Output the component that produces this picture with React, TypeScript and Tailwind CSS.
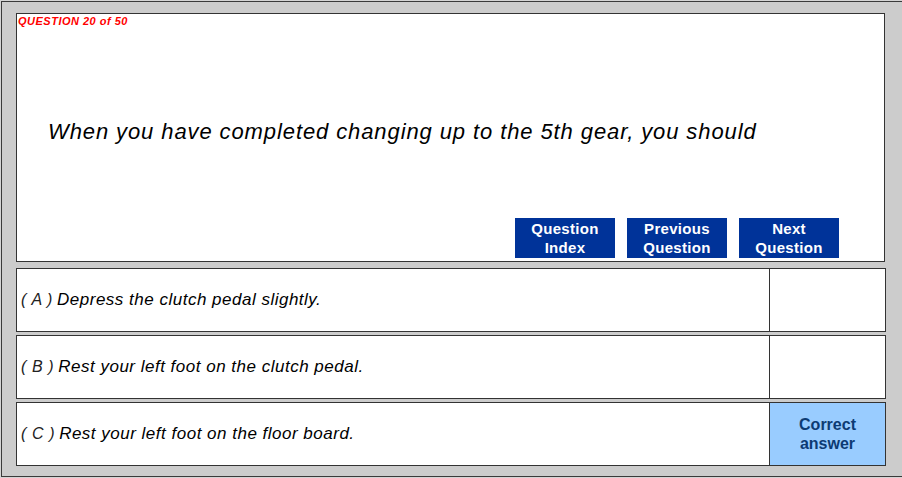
const answers = [
  { letter: "A", text: "Depress the clutch pedal slightly.", correct: false },
  { letter: "B", text: "Rest your left foot on the clutch pedal.", correct: false },
  { letter: "C", text: "Rest your left foot on the floor board.", correct: true },
];

const buttons = [
  ["Question", "Index"],
  ["Previous", "Question"],
  ["Next", "Question"],
];

export default function App() {
  return (
    <div className="w-[902px] h-[478px] bg-[#d4d4d4] pt-px pl-px overflow-hidden" style={{ fontFamily: '"Liberation Sans", Arial, sans-serif' }}>
      <div className="h-[476px] bg-[#cccccc] border-l border-t border-b border-[#3a3a3a] pl-[14px] pt-[11px]">
        <div className="w-[869px] h-[249px] bg-white border border-[#333333] flex flex-col">
          <div className="pl-[1px] pt-[1px] text-[11px] leading-[13px] font-bold italic tracking-[0.5px] text-[#ff0000]">
            QUESTION 20 of 50
          </div>
          <div className="pl-[31px] mt-[92px] text-[22px] leading-[24px] italic tracking-[0.9px] text-black">
            When you have completed changing up to the 5th gear, you should
          </div>
          <div className="flex gap-3 ml-[498px] mt-[74px]">
            {buttons.map((b) => (
              <div key={b.join()} className="w-[100px] h-[40px] bg-[#003399] text-white font-bold text-[15px] leading-[19px] tracking-[0.3px] flex flex-col items-center justify-center">
                <span>{b[0]}</span>
                <span>{b[1]}</span>
              </div>
            ))}
          </div>
        </div>
        <div className="flex flex-col gap-[3px] mt-[6px]">
          {answers.map((a) => (
            <div key={a.letter} className="w-[870px] h-[64px] bg-white border border-[#333333] flex">
              <div className="flex-1 flex items-center pl-[4px] italic text-black">
                <span className="text-[16px] font-light tracking-[0.6px] text-[#222] mr-[2px]">( {a.letter} )</span>
                <span className="text-[17px] tracking-[0.5px] ml-[2px]">{a.text}</span>
              </div>
              <div className={`w-[116px] border-l border-[#333333] flex items-center justify-center text-center text-[16px] leading-[19px] font-bold text-[#0d3b73] ${a.correct ? "bg-[#99ccff]" : "bg-white"}`}>
                {a.correct ? (
                  <span>
                    Correct
                    <br />
                    answer
                  </span>
                ) : null}
              </div>
            </div>
          ))}
        </div>
      </div>
    </div>
  );
}
